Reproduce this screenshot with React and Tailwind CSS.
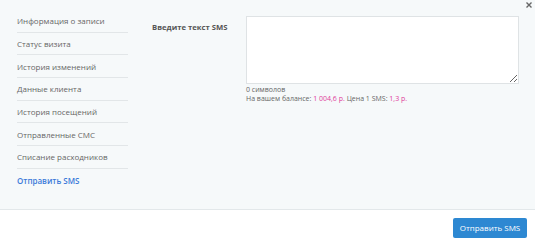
const menu = [
    "Информация о записи",
    "Статус визита",
    "История изменений",
    "Данные клиента",
    "История посещений",
    "Отправленные СМС",
    "Списание расходников",
];

const App = () => {
    return (
        <div className="relative flex h-[247px] w-[535px] flex-col bg-white font-['Open_Sans',sans-serif] text-[#666]">
            <button className="absolute right-[3px] top-[2px] text-[#666]">
                <svg width="6" height="6" viewBox="0 0 6 6">
                    <path d="M0.5 0.5L5.5 5.5M5.5 0.5L0.5 5.5" stroke="currentColor" strokeWidth="1.4" />
                </svg>
            </button>
            <section className="flex h-[210px] border-b border-[#e3e8ea] bg-[#f6f9fa]">
                <div className="ml-[17px] mt-[10px] w-[111px]">
                    {menu.map((item) => (
                        <div
                            key={item}
                            className="flex h-[22.7px] items-center border-b border-[#e2e6e8] pt-[1px] text-[8px]"
                        >
                            {item}
                        </div>
                    ))}
                    <div className="flex h-[22.7px] items-center pt-[1px] text-[8px] font-semibold text-[#3b7ad9]">
                        Отправить SMS
                    </div>
                </div>
                <div className="ml-[24px] mt-[22px] w-[94px] text-[7.7px] font-bold leading-[10px] text-[#555]">
                    Введите текст SMS
                </div>
                <div className="mt-[16px] flex flex-col">
                    <textarea className="h-[68px] w-[273px] resize border border-[#dfe3e5] bg-white outline-none" />
                    <div className="mt-[1px] text-[7px] leading-[9px]">0 символов</div>
                    <div className="text-[7px] leading-[9px]">
                        На вашем балансе: <span className="text-[#e0409b]">1 004,6 р.</span> Цена 1 SMS:{" "}
                        <span className="text-[#e0409b]">1,3 р.</span>
                    </div>
                </div>
            </section>
            <footer className="flex flex-1 items-start justify-end pr-[8px] pt-[8px]">
                <button className="h-[20px] w-[74px] rounded-[2px] bg-[#2d88d2] text-[8px] text-white">
                    Отправить SMS
                </button>
            </footer>
        </div>
    );
};

export default App;
